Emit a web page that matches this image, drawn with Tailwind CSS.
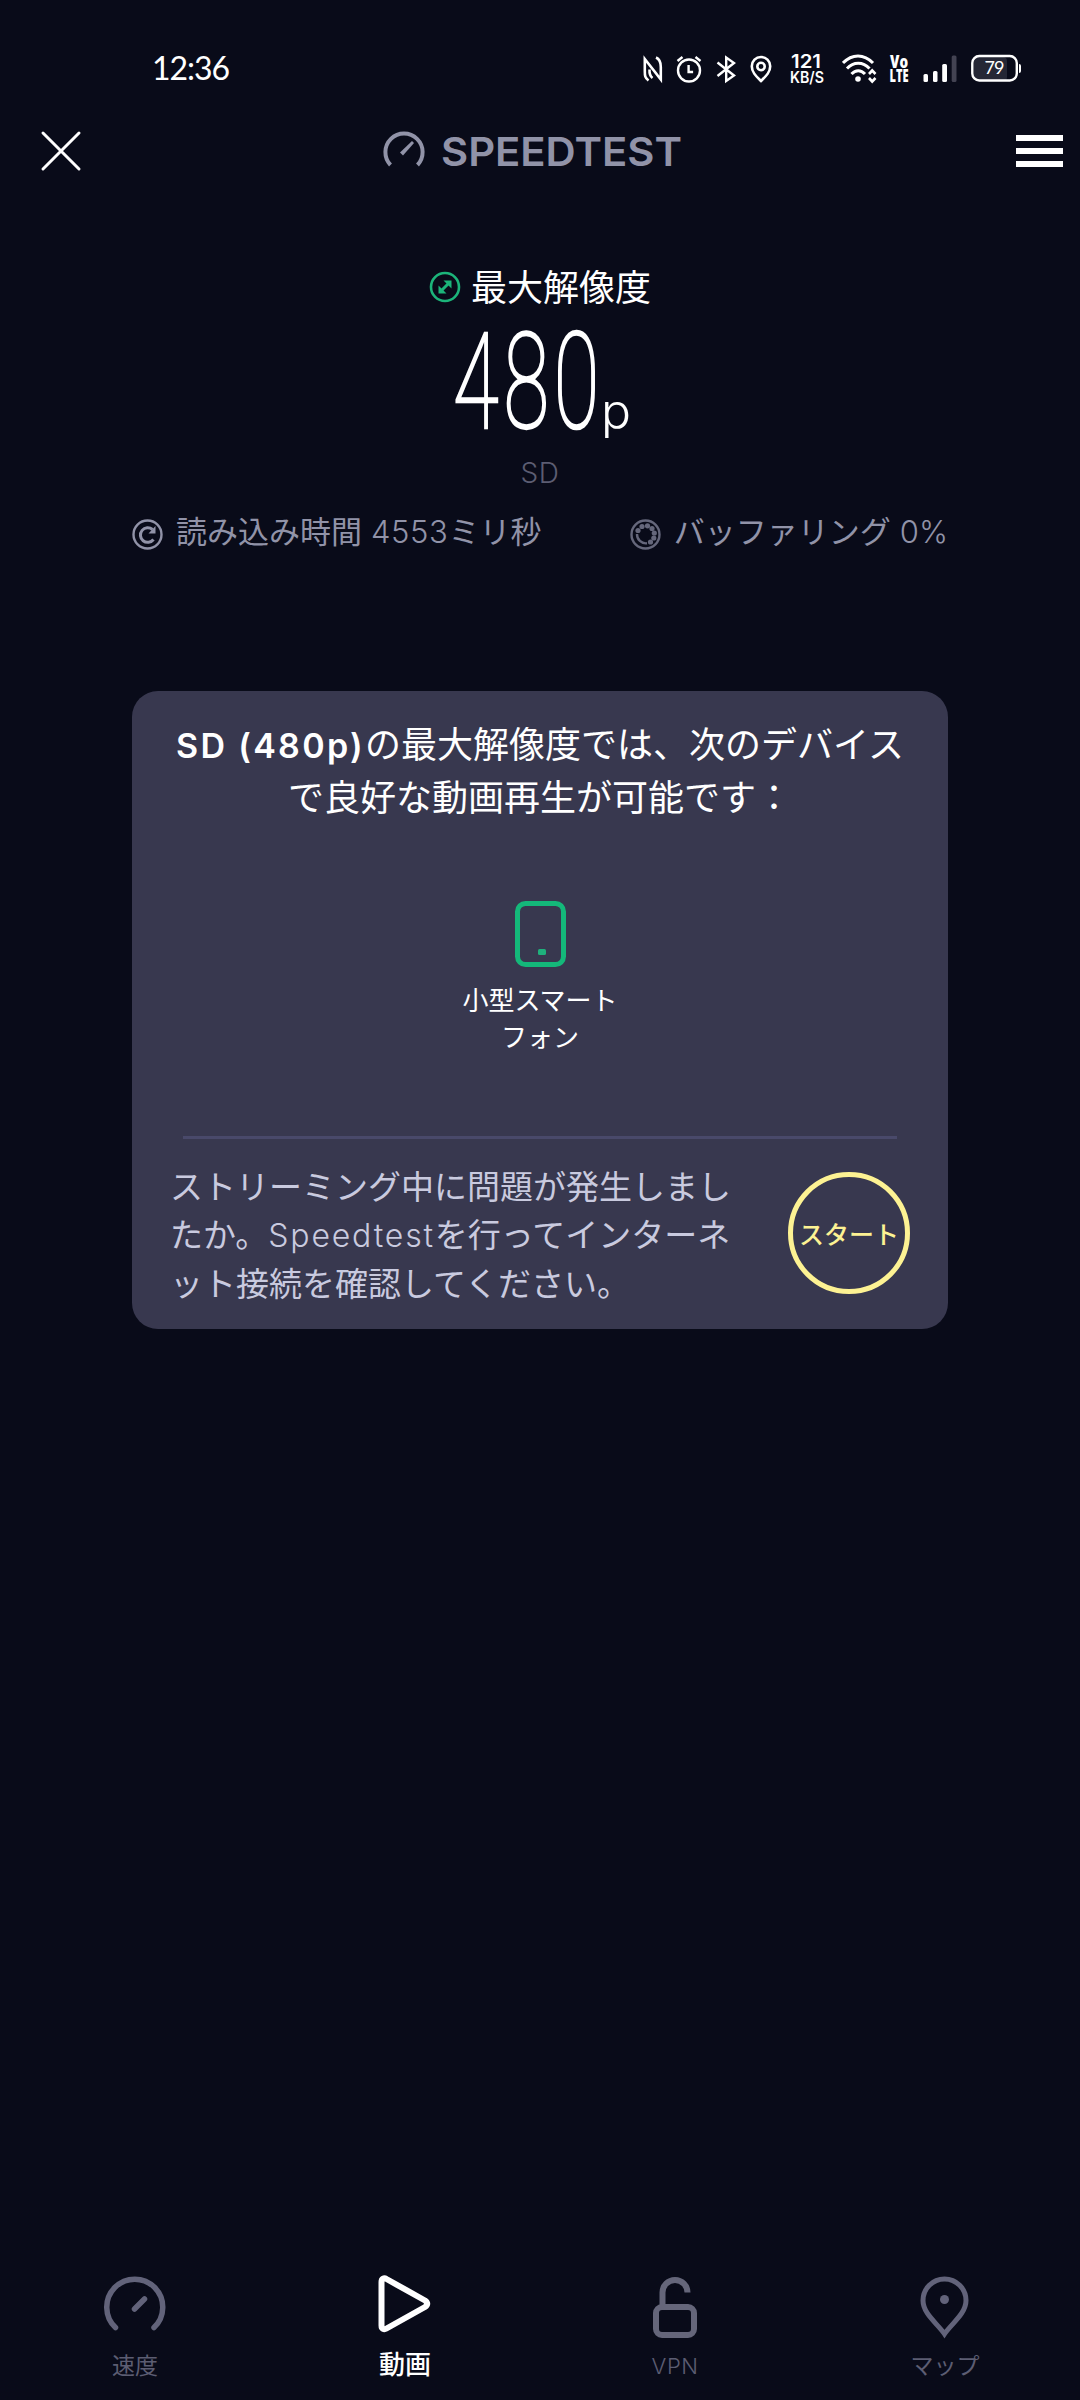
<!DOCTYPE html>
<html lang="ja">
<head>
<meta charset="utf-8">
<title>Speedtest</title>
<script src="https://cdn.jsdelivr.net/npm/@tailwindcss/browser@4"></script>
</head>
<body class="bg-[#090b19]">
<div class="w-[1080px] h-[2400px] overflow-hidden flex flex-col bg-[#090b19] text-white font-['Inter','Noto_Sans_CJK_JP',sans-serif]">

  <!-- status bar -->
  <div class="h-[100px] pt-[38px] pl-[152px] pr-[58px] flex items-center justify-between shrink-0">
    <svg class="w-[80px] h-[40px] overflow-visible" viewBox="0 0 80 40"><text x="0" y="30.500" font-family="Lato" font-size="32" fill="#fff" textLength="78" lengthAdjust="spacing">12:36</text></svg>
    <div class="flex items-center">
      <svg class="w-[20px] h-[40px]" viewBox="0 0 20 40" fill="none" stroke="#fff" stroke-width="2.600"><path d="M5.500 31.500C2 29 1.800 27 1.800 22V10L17.800 30.500V18C17.800 12.500 16.500 10 13 8.500M1.800 10L14 25.500M6.500 20.500C6.300 24.500 7.500 27.500 9.500 29"/></svg>
      <svg class="ml-[13px] w-[26px] h-[40px]" viewBox="0 0 26 40" fill="none" stroke="#fff" stroke-width="2.400"><circle cx="13" cy="21.500" r="11"/><path d="M12.600 16v7h4.500M1.500 12l5-4M24.500 12l-5-4"/></svg>
      <svg class="ml-[14px] w-[20px] h-[40px]" viewBox="0 0 20 40" fill="none" stroke="#fff" stroke-width="2.400"><path d="M1.500 13.500L18 26.500L10.200 32V8.500L18 14L1.500 27"/></svg>
      <svg class="ml-[14px] w-[22px] h-[40px]" viewBox="0 0 22 40" fill="none" stroke="#fff" stroke-width="2.600"><path d="M11 32C6.500 27.500 1.800 23.500 1.800 17.200A9.200 9.200 0 0 1 20.200 17.200C20.200 23.500 15.500 27.500 11 32Z"/><circle cx="11" cy="17.500" r="3.700"/></svg>
      <svg class="ml-[17px] w-[36px] h-[40px] overflow-visible" viewBox="0 0 36 40" font-family="Inter" font-weight="600" fill="#fff"><text x="2" y="18.500" font-size="18.500" textLength="30" lengthAdjust="spacingAndGlyphs">121</text><text x="1" y="33.500" font-size="15.500" textLength="34" lengthAdjust="spacingAndGlyphs">KB/S</text></svg>
      <svg class="ml-[17px] w-[36px] h-[40px]" viewBox="0 0 36 40" fill="none" stroke="#fff" stroke-width="3"><path d="M1 14C10 4.500 22 4.500 31 14M5 19.500C11.500 12.500 21 12.500 27.500 19.500M9.500 25C13.500 20.500 19 20.500 23 25"/><circle cx="16" cy="30" r="2.800" fill="#fff" stroke="none"/><path d="M27 25l3.200-3.500L33.500 25M27 29l3.200 3.500L33.500 29" stroke-width="2.600"/></svg>
      <svg class="ml-[11px] w-[20px] h-[40px] overflow-visible" viewBox="0 0 20 40" font-family="Open Sans" font-weight="800" fill="#fff"><text x="1" y="18.500" font-size="17" textLength="18" lengthAdjust="spacingAndGlyphs">Vo</text><text x="0.500" y="32.500" font-size="17" textLength="19" lengthAdjust="spacingAndGlyphs">LTE</text></svg>
      <svg class="ml-[14px] w-[34px] h-[40px]" viewBox="0 0 34 40" fill="#fff"><rect x="0.500" y="25" width="4.500" height="8" rx="1.500"/><rect x="10" y="22" width="4.500" height="11" rx="1.500"/><rect x="19.200" y="15" width="4.800" height="18" rx="1.500"/><rect x="28.700" y="6.500" width="4.800" height="26.500" rx="1.500" fill="#434352"/></svg>
      <svg class="ml-[14px] w-[51px] h-[40px] overflow-visible" viewBox="0 0 51 40"><rect x="3" y="8" width="33" height="24" rx="4" fill="#252735"/><rect x="1.300" y="7" width="44.500" height="24.500" rx="7" fill="none" stroke="#fff" stroke-width="2.400"/><path d="M48 15q2 0 2 2v5q0 2-2 2z" fill="#fff"/><text x="13.500" y="25.300" font-family="Lato" font-size="18" fill="#fff" textLength="20">79</text></svg>
    </div>
  </div>

  <!-- app bar -->
  <div class="h-[102px] pl-[40px] pr-[17px] flex items-center justify-between shrink-0">
    <svg class="w-[42px] h-[42px]" viewBox="0 0 42 42" stroke="#fff" stroke-width="3" stroke-linecap="round"><path d="M3 3L39 39M39 3L3 39"/></svg>
    <div class="flex items-center mr-[32px]">
      <svg class="w-[42px] h-[42px]" viewBox="0 0 42 42" fill="none" stroke="#9193a8" stroke-width="4"><path d="M7.500 35A18.600 18.600 0 1 1 34.500 35"/><path d="M17 22.500L29 11L31 13L20 25.500Z" fill="#9193a8" stroke="none"/></svg>
      <svg class="ml-[16px] w-[242px] h-[46px] overflow-visible" viewBox="0 0 242 46"><text x="0" y="38" font-family="Inter" font-weight="600" font-size="40" fill="#9193a8" textLength="241" lengthAdjust="spacingAndGlyphs">SPEEDTEST</text></svg>
    </div>
    <div class="w-[47px] flex flex-col gap-[7px]"><div class="h-[6px] bg-white"></div><div class="h-[6px] bg-white"></div><div class="h-[6px] bg-white"></div></div>
  </div>

  <!-- result -->
  <div class="mt-[58px] h-[54px] flex items-center justify-center shrink-0">
    <svg class="w-[32px] h-[32px]" viewBox="0 0 32 32" fill="none" stroke="#1cb47a" stroke-width="2.600"><circle cx="16" cy="16" r="14"/><path d="M12 20L20.500 11.500" stroke-width="3"/><path d="M14.500 9.500H22.500V17.500ZM9.500 14.500V22.500H17.500Z" fill="#1cb47a" stroke="none"/></svg>
    <div class="ml-[10px] pt-[2px] text-[36px] leading-[54px]">最大解像度</div>
  </div>
  <div class="h-[138px] flex justify-center shrink-0">
    <svg class="w-[180px] h-[138px] overflow-visible" viewBox="0 0 180 138" fill="#fff"><text transform="translate(3 113.500) scale(0.620 1)" x="0" y="0" font-family="Roboto" font-weight="100" font-size="134" textLength="236" lengthAdjust="spacing" stroke="#fff" stroke-width="2.200" vector-effect="non-scaling-stroke">480</text><text x="151" y="113.500" font-family="Inter" font-weight="350" font-size="47" textLength="30" lengthAdjust="spacingAndGlyphs">p</text></svg>
  </div>
  <div class="h-[40px] pt-[1px] text-center text-[28px] leading-[40px] font-light tracking-[0.500px] text-[#5c5d72] shrink-0">SD</div>
  <div class="mt-[17px] h-[46px] px-[132px] flex items-center justify-between text-[31px] leading-[46px] text-[#9193a8] shrink-0">
    <div class="flex items-center">
      <svg class="mt-[4px] w-[31px] h-[31px]" viewBox="0 0 31 31" fill="none" stroke="#9193a8" stroke-width="2.400"><circle cx="15.500" cy="15.500" r="14"/><path d="M21.500 20.500A7.300 7.300 0 1 1 20.500 10.500" stroke-width="3"/><path d="M23.500 7V14.500H16.500Z" fill="#9193a8" stroke="none"/></svg>
      <span class="ml-[13px]">読み込み時間</span><span class="ml-[9px] font-[350] tracking-[0.600px]">4553</span><span>ミリ秒</span>
    </div>
    <div class="flex items-center">
      <svg class="mt-[4px] w-[31px] h-[31px]" viewBox="0 0 31 31" fill="none" stroke="#65677b"><circle cx="15.500" cy="15.500" r="14" stroke-width="2.400"/><path d="M7 15A9 9 0 0 0 17 24.300" stroke-width="2.400"/><g fill="#65677b" stroke="none"><circle cx="8" cy="11.500" r="2.600"/><circle cx="12" cy="7.500" r="2.600"/><circle cx="17.500" cy="6.800" r="2.600"/><circle cx="22" cy="9.500" r="2.600"/><circle cx="24.300" cy="14" r="2.600"/><circle cx="23.800" cy="19" r="2.600"/><circle cx="20.500" cy="23" r="2.600"/></g></svg>
      <span class="ml-[13px]">バッファリング</span><span class="ml-[9px] font-[350]">0%</span>
    </div>
  </div>

  <!-- device card -->
  <div class="mt-[136px] mx-[132px] h-[638px] pt-[28px] rounded-[26px] bg-[#38384f] flex flex-col items-center shrink-0">
    <div class="text-center text-[36px] leading-[52px] whitespace-nowrap"><span class="font-semibold text-[34px] tracking-[2.300px]">SD (480p)</span>の最大解像度では、次のデバイス<br>で良好な動画再生が可能です：</div>
    <svg class="mt-[77px] w-[51px] h-[66px] shrink-0" viewBox="0 0 51 66"><rect x="2.500" y="2.500" width="46" height="61" rx="8" fill="none" stroke="#14b87a" stroke-width="5"/><rect x="23" y="48" width="8" height="6" rx="1.500" fill="#1fb07c"/></svg>
    <div class="mt-[15px] text-center text-[26px] leading-[37px]">小型スマート<br>フォン</div>
    <div class="mt-[80px] w-[714px] h-[3px] bg-[#49496a] shrink-0"></div>
    <div class="mt-[24px] w-full pl-[38px] pr-[38px] flex items-start justify-between text-[#c9cadf]">
      <div class="text-[33px] leading-[48px] whitespace-nowrap">ストリーミング中に問題が発生しまし<br>たか。<span class="font-[350] text-[32px] tracking-[1.800px]">Speedtest</span>を行ってインターネ<br>ット接続を確認してください。</div>
      <div class="mt-[9px] w-[122px] h-[122px] rounded-full border-[5px] border-[#fdf293] text-[#fdf293] text-[25px] font-medium flex items-center justify-center whitespace-nowrap pt-[5px]">スタート</div>
    </div>
  </div>

  <!-- bottom navigation -->
  <div class="mt-auto h-[126px] grid grid-cols-4 text-[23px] leading-[34px] text-[#5c5d72] shrink-0">
    <div class="flex flex-col items-center">
      <svg class="w-[64px] h-[66px]" viewBox="0 0 64 66" fill="none" stroke="#62637a" stroke-width="5.500" stroke-linecap="round"><path d="M12.500 53.500A28 28 0 1 1 51 53.500M31.500 35L41.500 25"/></svg>
      <div class="mt-[9px]">速度</div>
    </div>
    <div class="flex flex-col items-center text-white">
      <svg class="w-[64px] h-[66px]" viewBox="0 0 64 66" fill="none" stroke="#fff" stroke-width="6" stroke-linejoin="round"><path d="M8.500 8C8.500 4.500 11 3.500 13.500 5L52 26.500C55 28.500 55 31 52 33L13.500 54.500C11 56 8.500 55 8.500 51.500Z"/></svg>
      <div class="mt-[8px] text-[26px] font-medium">動画</div>
    </div>
    <div class="flex flex-col items-center">
      <svg class="w-[64px] h-[66px]" viewBox="0 0 64 66" fill="none" stroke="#65667a" stroke-width="6"><rect x="13" y="33" width="38" height="28" rx="6"/><path d="M19.500 33V18.500A12.500 12.500 0 0 1 44.500 18.500"/></svg>
      <div class="mt-[9px] text-[22px] font-light tracking-[0.500px]">VPN</div>
    </div>
    <div class="flex flex-col items-center">
      <svg class="w-[64px] h-[66px]" viewBox="0 0 64 66" fill="none" stroke="#62637a" stroke-width="5"><path d="M31.500 60C25 50 10 40 10 26.500A21.500 21.500 0 0 1 53 26.500C53 40 38 50 31.500 60Z"/><circle cx="31.500" cy="25.500" r="4.500" fill="#62637a" stroke="none"/></svg>
      <div class="mt-[9px]">マップ</div>
    </div>
  </div>
</div>
</body>
</html>
